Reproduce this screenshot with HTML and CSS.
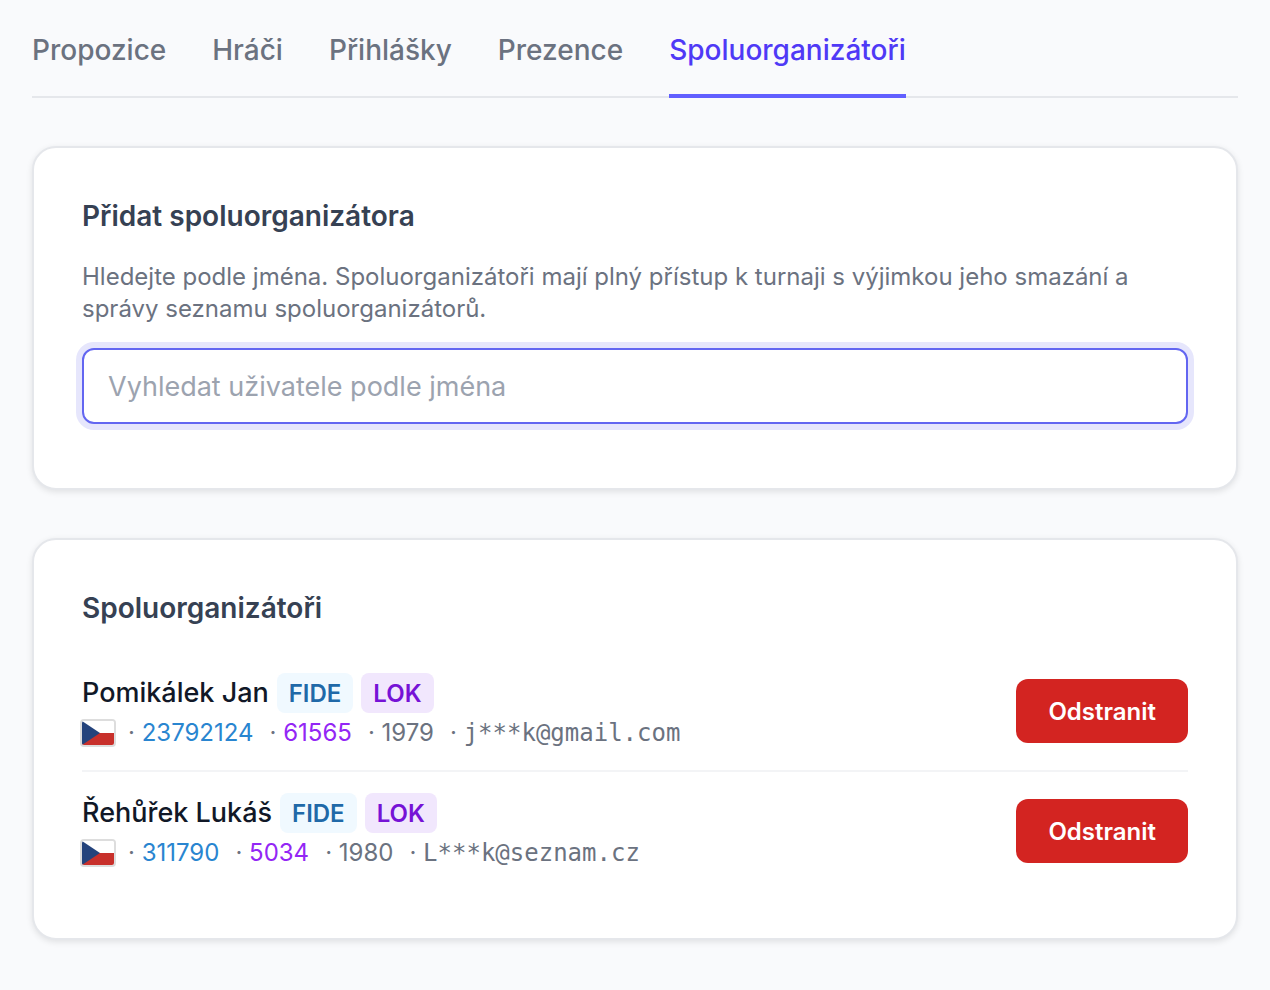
FILE: index.html
```html
<!DOCTYPE html>
<html lang="cs">
<head>
    <meta charset="UTF-8">
    <meta name="viewport" content="width=device-width, initial-scale=1.0">
    <title>Spoluorganizátoři</title>
    <link rel="stylesheet" href="styles.css">
</head>
<body>
    <nav class="tabs">
        <a href="#propozice">Propozice</a>
        <a href="#hraci">Hráči</a>
        <a href="#prihlasky">Přihlášky</a>
        <a href="#prezence">Prezence</a>
        <a href="#spoluorganizatori" class="active" aria-current="page">Spoluorganizátoři</a>
    </nav>

    <main>
        <section class="card">
            <h2><label for="search">Přidat spoluorganizátora</label></h2>
            <p class="hint">Hledejte podle jména. Spoluorganizátoři mají plný přístup k turnaji s výjimkou jeho smazání a správy seznamu spoluorganizátorů.</p>
            <input type="text" id="search" class="search" placeholder="Vyhledat uživatele podle jména">
        </section>

        <section class="card">
            <h2>Spoluorganizátoři</h2>
            <ul class="people">
                <li>
                    <div class="person">
                        <div class="name">Pomikálek Jan <span class="badge fide">FIDE</span> <span class="badge lok">LOK</span></div>
                        <div class="meta">
                            <svg class="flag" viewBox="0 0 32 24" preserveAspectRatio="none" aria-hidden="true">
                                <rect width="32" height="12" fill="#fff"/>
                                <rect y="12" width="32" height="12" fill="#c8302b"/>
                                <path d="M0 0L18 12L0 24Z" fill="#24437c"/>
                            </svg>
                            <span class="item">· <a href="#fide" class="fide-id">23792124</a></span>
                            <span class="item">· <a href="#lok" class="lok-id">61565</a></span>
                            <span class="item">· 1979</span>
                            <span class="item">· <span class="email">j***k@gmail.com</span></span>
                        </div>
                    </div>
                    <button type="button" class="remove">Odstranit</button>
                </li>
                <li>
                    <div class="person">
                        <div class="name">Řehůřek Lukáš <span class="badge fide">FIDE</span> <span class="badge lok">LOK</span></div>
                        <div class="meta">
                            <svg class="flag" viewBox="0 0 32 24" preserveAspectRatio="none" aria-hidden="true">
                                <rect width="32" height="12" fill="#fff"/>
                                <rect y="12" width="32" height="12" fill="#c8302b"/>
                                <path d="M0 0L18 12L0 24Z" fill="#24437c"/>
                            </svg>
                            <span class="item">· <a href="#fide" class="fide-id">311790</a></span>
                            <span class="item">· <a href="#lok" class="lok-id">5034</a></span>
                            <span class="item">· 1980</span>
                            <span class="item">· <span class="email">L***k@seznam.cz</span></span>
                        </div>
                    </div>
                    <button type="button" class="remove">Odstranit</button>
                </li>
            </ul>
        </section>
    </main>
</body>
</html>
```

FILE: styles.css
```css
* {
    box-sizing: border-box;
}

body {
    margin: 0;
    padding: 0 32px;
    background-color: #f9fafc;
    color: #111827;
    font-family: Inter, "Liberation Sans", sans-serif;
    font-size: 27px;
    line-height: 40px;
}

a {
    color: inherit;
    text-decoration: none;
}

.tabs {
    display: flex;
    gap: 46px;
    box-shadow: inset 0 -2px #e5e7eb;
    font-size: 28px;
    font-weight: 500;
    color: #6b7280;
}

.tabs a {
    padding: 30px 0 24px;
    border-bottom: 4px solid transparent;
}

.tabs .active {
    color: #4f39f6;
    border-color: #615fff;
}

main {
    display: grid;
    gap: 48px;
    padding: 48px 0;
}

.card {
    padding: 48px;
    background: #fff;
    border: 2px solid #e5e7eb;
    border-radius: 24px;
    box-shadow: 0 2px 6px rgba(0, 0, 0, 0.1);
}

h2 {
    margin: 0 0 24px;
    font-size: 28px;
    font-weight: 600;
    color: #364153;
}

.hint {
    margin: 0;
    padding: 1px 0 23px;
    font-size: 24px;
    line-height: 32px;
    color: #6b7280;
}

.search {
    display: block;
    width: 100%;
    height: 76px;
    margin-bottom: 16px;
    padding: 0 24px;
    border: 2px solid #6366f1;
    border-radius: 12px;
    outline: none;
    box-shadow: 0 0 0 6px #e6e6fc;
    font: inherit;
    color: #111827;
}

.search::placeholder {
    color: #9ca3af;
}

.people {
    margin: 0;
    padding: 0;
    list-style: none;
}

.people li {
    display: flex;
    align-items: center;
    justify-content: space-between;
    padding: 17px 0;
}

.people li + li {
    border-top: 2px solid #f3f4f6;
}

.person {
    padding-top: 4px;
}

.name {
    display: flex;
    align-items: center;
    gap: 8px;
    font-weight: 500;
}

.badge {
    padding: 2px 12px 0;
    border-radius: 8px;
    font-size: 24px;
    font-weight: 600;
    line-height: 38px;
}

.fide {
    background: #f0f9ff;
    color: #2069a8;
}

.lok {
    background: #f1e7fd;
    color: #7612d6;
}

.meta {
    display: flex;
    align-items: center;
    gap: 16px;
    font-size: 24px;
    color: #6b7280;
}

.flag {
    width: 36px;
    height: 28px;
    margin: 0 -4px 0 -2px;
    border: 2px solid #dddddd;
    border-radius: 4px;
}

.fide-id {
    color: #2985d0;
}

.lok-id {
    color: #9326f5;
}

.email {
    font-family: "DejaVu Sans Mono", monospace;
}

.remove {
    height: 64px;
    padding: 2px 32px 0;
    border: 0;
    border-radius: 12px;
    background: #d32421;
    color: #fff;
    font: inherit;
    font-size: 24px;
    font-weight: 600;
    cursor: pointer;
}
```
